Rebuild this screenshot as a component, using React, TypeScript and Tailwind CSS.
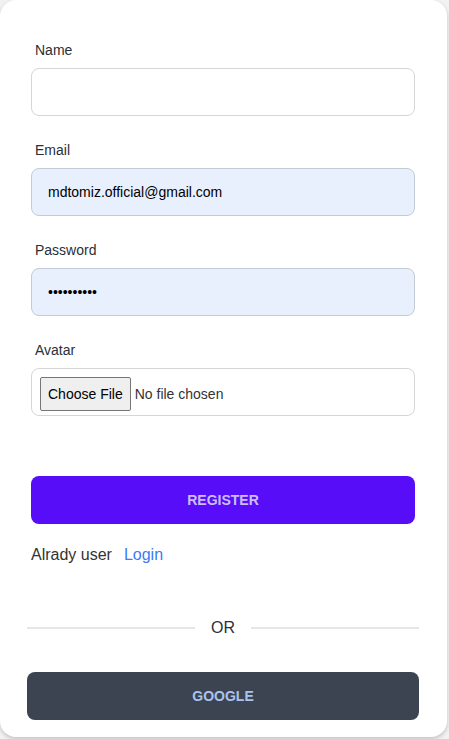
import { useState } from "react";

const font = { fontFamily: '"Liberation Sans", Arial, sans-serif' };

function Field({
  label,
  type,
  value,
  autofill,
}: {
  label: string;
  type: string;
  value?: string;
  autofill?: boolean;
}) {
  const [text, setText] = useState(value ?? "");
  return (
    <div className="flex flex-col">
      <label className="px-1 py-2 text-sm leading-5 text-[#2a2f38]">{label}</label>
      <input
        className={
          "h-12 w-full rounded-lg border px-4 text-sm text-black outline-none " +
          (autofill ? "border-[#c5cbd6] bg-[#e8f0fe]" : "border-[#d6d6d6] bg-white")
        }
        type={type}
        value={text}
        onChange={(event) => setText(event.target.value)}
      />
    </div>
  );
}

export default function App() {
  return (
    <div className="h-[739px] w-[449px] overflow-hidden bg-[#f2f2f2]" style={font}>
      <div className="h-[737px] w-[447px] rounded-2xl bg-white pl-[27px] pr-[28px] pt-8 shadow-[0_2px_4px_rgba(0,0,0,0.2)]">
        <form className="flex flex-col gap-4 px-1" onSubmit={(event) => event.preventDefault()}>
          <Field label="Name" type="text" />
          <Field label="Email" type="email" value="mdtomiz.official@gmail.com" autofill />
          <Field label="Password" type="password" value="1234567890" autofill />
          <div className="flex flex-col">
            <label className="px-1 py-2 text-sm leading-5 text-[#2a2f38]">Avatar</label>
            <input
              type="file"
              className="h-12 w-full rounded-lg border border-[#d6d6d6] bg-white pl-2 pt-2 text-sm leading-5 text-[#333] file:mr-1 file:rounded-[2px] file:border file:border-[#767676] file:bg-[#efefef] file:px-[7px] file:py-[6px] file:text-black"
            />
          </div>
          <button
            type="submit"
            className="mt-11 h-12 w-full rounded-lg bg-[#570df8] text-sm font-bold uppercase text-[#cdbdfd]"
          >
            Register
          </button>
          <p className="mt-[3px] text-base text-[#333]">
            Alrady user
            <a href="#" className="ml-3 text-[#3b7cf5]">
              Login
            </a>
          </p>
        </form>

        <div className="mt-[49px] flex items-center gap-4 text-base text-[#2a2f38]">
          <div className="h-[2px] flex-1 bg-[#e6e6e6]" />
          <span>OR</span>
          <div className="h-[2px] flex-1 bg-[#e6e6e6]" />
        </div>

        <button
          type="button"
          className="mt-8 h-12 w-full rounded-lg bg-[#3d4451] text-sm font-bold uppercase text-[#a9c3ee]"
        >
          Google
        </button>
      </div>
    </div>
  );
}
